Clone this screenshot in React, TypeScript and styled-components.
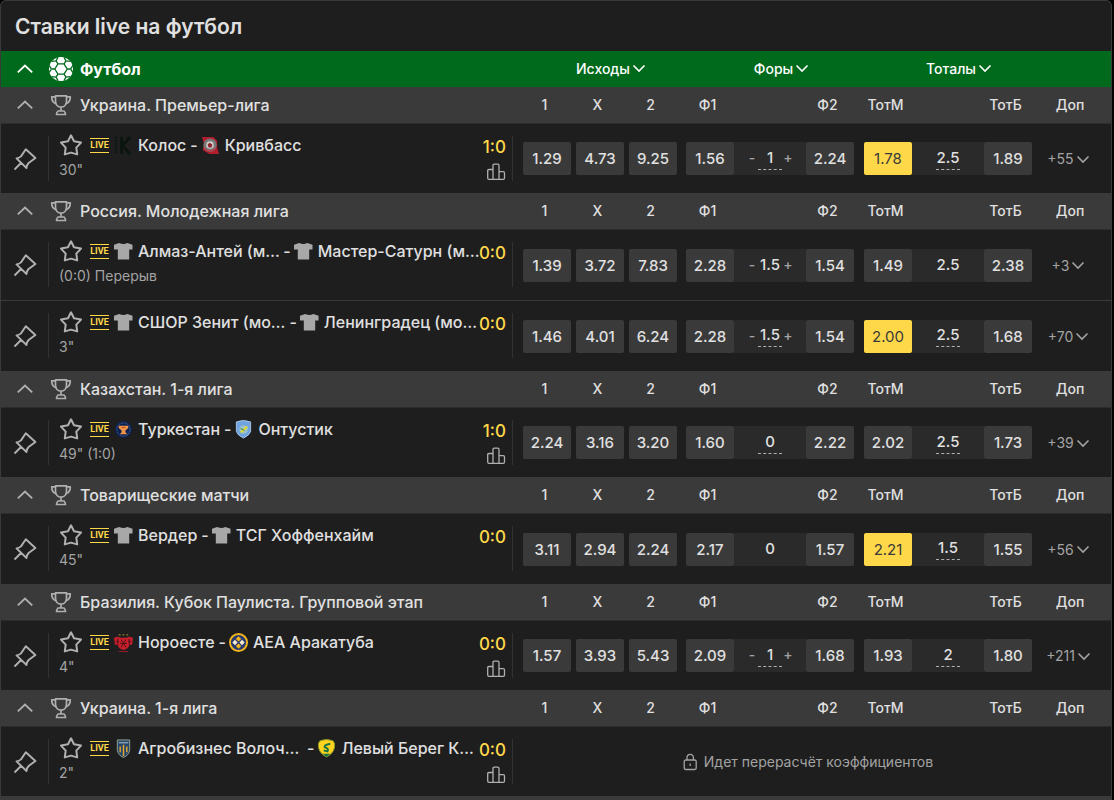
import React from 'react';
import styled, { createGlobalStyle, css } from 'styled-components';

const color = {
  page: '#000000',
  row: '#1e1e1e',
  bar: '#3a3a3a',
  line: '#323232',
  cell: '#3a3a3a',
  step: '#2a2a2a',
  green: '#006a1c',
  text: '#e0e0e0',
  muted: '#a3a3a3',
  icon: '#b0b0b0',
  yellow: '#ffd84a',
};

const Global = createGlobalStyle`
  * { box-sizing: border-box; }
  body {
    margin: 0;
    background: ${color.page};
    color: ${color.text};
    font-family: Inter, "Noto Sans", sans-serif;
    font-size: 15px;
    font-weight: 500;
  }
  button {
    font: inherit;
    color: inherit;
    background: none;
    border: 0;
    padding: 0;
    cursor: pointer;
  }
  svg { display: block; flex: none; }
`;

const Page = styled.main`
  padding-right: 2px;
`;

const Panel = styled.section`
  min-height: 100vh;
  background: ${color.bar};
  border: 1px solid ${color.bar};
  border-bottom: 0;
  border-radius: 6px 6px 0 0;
  overflow: hidden;
`;

const Title = styled.h1`
  margin: 0;
  padding: 2px 14px 0;
  background: ${color.row};
  font-size: 21px;
  line-height: 48px;
  font-weight: 600;
`;

const Board = styled.table`
  display: block;
`;

const Group = styled.tbody`
  display: block;
`;

const rowGrid = css`
  display: grid;
  grid-template-columns: 47px minmax(0, 1fr) 58px 53px 53px 57px 72px 48px 58px 72px 48px 79px;
  align-items: center;
`;

const SportRow = styled.tr`
  ${rowGrid}
  height: 36px;
  background: ${color.green};
  color: #fff;
`;

const LeagueRow = styled.tr`
  ${rowGrid}
  height: 37px;
  background: ${color.bar};
  border-bottom: 1px solid #2c2c2c;
`;

const MatchRow = styled.tr<{ $tall?: boolean }>`
  ${rowGrid}
  min-height: ${(p) => (p.$tall ? 70 : 69)}px;
  background: ${color.row};
  & + & {
    border-top: 1px solid ${color.bar};
    min-height: 71px;
  }
`;

const NameHead = styled.th`
  display: grid;
  grid-template-columns: 24px 1fr;
  justify-items: center start;
  align-items: center;
  gap: 7px;
  padding: 0 0 0 1px;
  text-align: left;
  white-space: nowrap;
  > * { justify-self: start; }
  > svg { justify-self: center; }
`;

const SportName = styled.span`
  font-size: 16px;
  font-weight: 700;
`;

const LeagueName = styled.span`
  font-size: 16px;
  font-weight: 500;
`;

const MarketHead = styled.th`
  grid-column: span 3;
  padding: 0 0 2px 32px;
  font-weight: 500;
  display: flex;
  justify-content: center;
`;

const MarketButton = styled.button`
  display: flex;
  align-items: center;
  gap: 2px;
  font-size: 14px;
`;

const ColumnHead = styled.th`
  width: 48px;
  justify-self: end;
  padding: 0 5px 2px 0;
  font-size: 14px;
  font-weight: 500;
  text-align: center;
`;

const MoreHead = styled(ColumnHead)`
  width: 79px;
  padding: 0 3px 2px 0;
`;

const IconCell = styled.td`
  padding: 0;
  display: flex;
  justify-content: center;
  color: ${color.icon};
`;

const SportIconCell = styled(IconCell)`
  color: #fff;
`;

const InfoCell = styled.td`
  display: grid;
  grid-template-columns: minmax(0, 1fr) auto;
  align-self: stretch;
  align-content: start;
  height: 45px;
  margin-top: 12px;
  padding: 0 6px 0 10px;
  border: solid ${color.line};
  border-width: 0 1px;
`;

const Teams = styled.div`
  display: flex;
  align-items: center;
  height: 22px;
  margin-top: -2px;
  font-size: 16px;
  white-space: nowrap;
`;

const Star = styled.button`
  display: flex;
  margin-right: 7px;
  color: ${color.icon};
`;

const Live = styled.span`
  display: flex;
  justify-content: center;
  width: 19px;
  height: 15px;
  margin-right: 5px;
  border: solid ${color.yellow};
  border-width: 1px 0;
  color: ${color.yellow};
  font: 700 9px/13px Roboto, sans-serif;
`;

const TeamName = styled.span<{ $width?: number }>`
  min-width: ${(p) => (p.$width ? p.$width + 'px' : '0')};
  margin-left: 5px;
`;

const Dash = styled.span`
  padding: 0 3px 0 4px;
`;

const Time = styled.div`
  color: ${color.muted};
  font-size: 14px;
  line-height: 24px;
  font-weight: 400;
`;

const Score = styled.div`
  color: ${color.yellow};
  font-size: 17px;
  line-height: 22px;
  text-align: right;
`;

const Stats = styled.button`
  display: flex;
  justify-content: flex-end;
  align-items: flex-end;
  height: 23px;
  color: ${color.icon};
`;

const OddCell = styled.td`
  padding: 0;
  width: 48px;
  justify-self: end;
`;

const Odd = styled.button<{ $hot?: boolean }>`
  display: block;
  width: 100%;
  height: 33px;
  border-radius: 2px;
  background: ${(p) => (p.$hot ? color.yellow : color.cell)};
  color: ${(p) => (p.$hot ? '#3a3a3a' : color.text)};
  font-size: 15px;
  font-weight: ${(p) => (p.$hot ? 400 : 500)};
  text-align: center;
`;

const LineCell = styled.td`
  display: flex;
  align-items: center;
  justify-content: center;
  height: 33px;
  padding: 0;
  background: ${color.step};
`;

const StepButton = styled.button`
  width: 12px;
  padding-bottom: 2px;
  color: ${color.muted};
  font-size: 14px;
`;

const LineValue = styled.button<{ $dashed?: boolean }>`
  width: 24px;
  height: ${(p) => (p.$dashed ? 22 : 20)}px;
  border-bottom: ${(p) => (p.$dashed ? '1px dashed ' + color.icon : '0')};
  font-size: 15px;
  line-height: 20px;
  white-space: nowrap;
  display: flex;
  justify-content: center;
`;

const MoreCell = styled.td`
  padding: 0 6px 0 0;
  display: flex;
  justify-content: center;
`;

const More = styled.button`
  display: flex;
  align-items: center;
  gap: 2px;
  color: ${color.muted};
  font-size: 14px;
  font-weight: 400;
`;

const LockedCell = styled.td`
  grid-column: 3 / -1;
  padding: 0 8px 0 0;
  display: flex;
  align-items: center;
  justify-content: center;
  gap: 6px;
  color: ${color.muted};
  font-size: 14px;
  font-weight: 400;
`;

const Chevron = ({ up, size = 14 }: { up?: boolean; size?: number }) => (
  <svg width={size} height={size} viewBox="0 0 14 14" fill="none" stroke="currentColor" strokeWidth="1.6">
    <path d={up ? 'M0.7 10 L7 4 L13.3 10' : 'M1.5 4.5 L7 10 L12.5 4.5'} />
  </svg>
);

const Ball = () => (
  <svg width="24" height="24" viewBox="0 0 24 24">
    <circle cx="12" cy="12" r="12" fill="#fff" />
    <g fill="none" stroke={color.green} strokeWidth="1.3">
      <path d="M9 6.8h6l3.2 5.2-3.2 5.2H9L5.8 12z" />
      <path d="M9 6.8 7 3.8M15 6.8l2-3M9 17.2l-2 3M15 17.2l2 3M5.8 12H2.5M18.2 12h3.3" />
      <path d="M7 3.8 9 .4M7 3.8 2.6 4.4M17 3.8 15 .4M17 3.8l4.4.6M7 20.2l2 3.4M7 20.2l-4.4-.6M17 20.2l-2 3.4M17 20.2l4.4-.6M2.5 12 0 8.5M2.5 12 0 15.5M21.5 12 24 8.5M21.5 12l2.5 3.5" />
    </g>
  </svg>
);

const Trophy = () => (
  <svg width="22" height="22" viewBox="0 0 22 22" fill="none" stroke={color.icon} strokeWidth="1.7" strokeLinejoin="round">
    <path d="M5.5 1.8h11v5.4c0 3.5-2.4 5.8-5.5 5.8S5.5 10.7 5.5 7.2z" />
    <path d="M5.5 2.8H1.7c0 3.8 1.6 6.2 4.5 7M16.5 2.8h3.8c0 3.8-1.6 6.2-4.5 7M11 13v4M8 17h6q1.5 1.5 1.5 3.5h-9Q6.5 18.5 8 17z" />
  </svg>
);

const Pin = () => (
  <svg width="24" height="24" viewBox="0 0 24 24" fill="none" stroke="currentColor" strokeWidth="1.9" strokeLinejoin="round">
    <path d="M1.5 22.5 8 16M3.5 11.4Q6 11.2 8 9.4L12.8 2.2 22.4 11 15.6 16Q13.6 18 13.5 21z" />
  </svg>
);

const StarIcon = () => (
  <svg width="24" height="22" viewBox="0 0 24 22" fill="none" stroke="currentColor" strokeWidth="2" strokeLinejoin="round">
    <path d="M12 1.3 15 7.3 22 8.6 17.3 13.6 18.2 20.4 12 18.6 5.8 20.4 6.7 13.6 2 8.6 9 7.3z" />
  </svg>
);

const StatsIcon = () => (
  <svg width="20" height="18" viewBox="0 0 20 18" fill="none" stroke="currentColor" strokeWidth="1.3" strokeLinejoin="round">
    <path d="M7 16.3V2.5Q7 1.2 8.3 1.2H11.7Q13 1.2 13 2.5V16.3M7 6.5H3Q1.7 6.5 1.7 7.8V15Q1.7 16.3 3 16.3H17.2Q18.5 16.3 18.5 15V10Q18.5 8.6 17.2 8.6H13" />
  </svg>
);

const LockIcon = () => (
  <svg width="15" height="18" viewBox="0 0 15 18" fill="none" stroke="currentColor" strokeWidth="1.3">
    <rect x="1.2" y="7" width="12" height="9.5" rx="1.5" />
    <path d="M4 7V4.5a3.2 3.2 0 0 1 6.4 0V7M7.2 10.500v2.5" />
  </svg>
);

type LogoKind = 'shirt' | 'kolos' | 'kryvbas' | 'turkestan' | 'ontustik' | 'noroeste' | 'aea' | 'agro' | 'left';

const logos: Record<LogoKind, React.ReactNode> = {
  shirt: <path fill="#a8a8a8" d="M5.500 1 0 3v5h4v10.5h12V8h3.5V3L14 1Q10 3 5.500 1z" />,
  kolos: (
    <g stroke="#0b1510" fill="none">
      <path strokeWidth="3" d="M8 1v18M17 1 9 10l8 9" />
      <path strokeWidth="2" d="M2 1v18" strokeDasharray="2 1" />
    </g>
  ),
  kryvbas: (
    <g>
      <path fill="#b01e2d" d="M1 1h12l4 4v7l2 7H9L2 15 3 8z" />
      <circle cx="9.5" cy="9.5" r="7" fill="#777" />
      <circle cx="9.5" cy="9.5" r="4" fill="#ccc" />
      <path fill="#8d2630" d="m9 7 3 2-1 3H8L7 9z" />
      <path fill="none" stroke="#d23344" d="M3.5 12.5q6 6 12 0" />
    </g>
  ),
  turkestan: (
    <g>
      <circle cx="10" cy="10" r="9" fill="#0b2150" />
      <circle cx="10" cy="10" r="7" fill="none" stroke="#6978a0" strokeWidth="1" strokeDasharray="1 1" />
      <path fill="#f0944a" d="M5 6h10v2.5L12 11v2l2 2H6l2-2v-2L5 8.5z" />
      <path stroke="#b44a20" d="M8 8h4" />
    </g>
  ),
  ontustik: (
    <g>
      <path fill="#6fa4e0" stroke="#a9c4e6" d="M2.5 2Q10-1 17.5 2v10q-1 4-7.5 7-6.500-3-7.500-7z" />
      <circle cx="10" cy="10" r="4.5" fill="#9cc2c9" />
      <path stroke="#d9d83b" strokeWidth="2.5" d="m7 13 7-6" />
      <path stroke="#3f7b57" d="m7 9 4 2" />
    </g>
  ),
  noroeste: (
    <g>
      <path fill="#c91f2c" d="M0 5 4 4l3 1h6l3-1 4 1-1 7-3 1q-1 4-6 5-5-1-6-5l-3-1z" />
      <path stroke="#4c1118" fill="none" d="M4 6v7M16 6v7M7.5 7l5 8M12.5 7l-5 8M2 9h3M15 9h3M6.500 11h7" />
      <path stroke="#b79b2a" strokeDasharray="2 2" d="M5 2h10" />
      <path stroke="#a01a25" d="M5 19.5h10" />
    </g>
  ),
  aea: (
    <g>
      <circle cx="10" cy="10" r="9" fill="#253a70" stroke="#f2b51d" strokeWidth="2" />
      <path fill="#f2b51d" d="m10 3.500 2.800 2.800L10 9 7.200 6.300zM10 11l2.800 2.800L10 16.500l-2.800-2.700z" />
      <path fill="#f4ead0" d="M6.300 7.200 9 10l-2.700 2.800L3.500 10zM13.700 7.200 16.500 10l-2.800 2.800L11 10z" />
    </g>
  ),
  agro: (
    <g>
      <path fill="#26466b" stroke="#9ba58b" d="M3.5 1h13v11q-1 5-6.500 7.500Q4.500 17 3.500 12z" />
      <path stroke="#e5a72c" strokeWidth="1.5" fill="none" d="M6.5 8v6M10 6v12M13.500 8v6" />
      <path stroke="#b7ccd8" d="M5 4h10" />
    </g>
  ),
  left: (
    <g>
      <path fill="#ffd31e" stroke="#8a9b2a" d="M3 2q7-3 14 0l1.500 3q1 9-8.500 14Q.5 14 1.500 5z" />
      <path fill="none" stroke="#157246" strokeWidth="2" d="M14 5Q8 6 8 8.500q5 1.500 3 4.500l-4-1" />
      <path fill="#157246" d="M6 15.500h8L10 19z" />
    </g>
  ),
};

const Logo = ({ kind }: { kind: LogoKind }) => (
  <svg width="19" height="19" viewBox="0 0 20 20">
    {logos[kind]}
  </svg>
);

type Line = { value: string; dashed?: boolean; steps?: boolean };
type Match = {
  home: string;
  homeLogo: LogoKind;
  homeWidth?: number;
  away: string;
  awayLogo: LogoKind;
  score: string;
  time: string;
  stats?: boolean;
  odds?: string[];
  handicap?: Line;
  total?: Line;
  hot?: boolean;
  more?: string;
};

const leagues: { name: string; matches: Match[] }[] = [
  {
    name: 'Украина. Премьер-лига',
    matches: [
      {
        home: 'Колос', homeLogo: 'kolos', away: 'Кривбасс', awayLogo: 'kryvbas', score: '1:0', time: '30"', stats: true,
        odds: ['1.29', '4.73', '9.25', '1.56', '2.24', '1.78', '1.89'],
        handicap: { value: '1', dashed: true, steps: true }, total: { value: '2.5', dashed: true }, hot: true, more: '+55',
      },
    ],
  },
  {
    name: 'Россия. Молодежная лига',
    matches: [
      {
        home: 'Алмаз-Антей (м…', homeLogo: 'shirt', away: 'Мастер-Сатурн (м…', awayLogo: 'shirt', score: '0:0', time: '(0:0) Перерыв',
        odds: ['1.39', '3.72', '7.83', '2.28', '1.54', '1.49', '2.38'],
        handicap: { value: '1.5', steps: true }, total: { value: '2.5' }, more: '+3',
      },
      {
        home: 'СШОР Зенит (мо…', homeLogo: 'shirt', away: 'Ленинградец (мо…', awayLogo: 'shirt', score: '0:0', time: '3"',
        odds: ['1.46', '4.01', '6.24', '2.28', '1.54', '2.00', '1.68'],
        handicap: { value: '1.5', dashed: true, steps: true }, total: { value: '2.5', dashed: true }, hot: true, more: '+70',
      },
    ],
  },
  {
    name: 'Казахстан. 1-я лига',
    matches: [
      {
        home: 'Туркестан', homeLogo: 'turkestan', away: 'Онтустик', awayLogo: 'ontustik', score: '1:0', time: '49" (1:0)', stats: true,
        odds: ['2.24', '3.16', '3.20', '1.60', '2.22', '2.02', '1.73'],
        handicap: { value: '0', dashed: true }, total: { value: '2.5', dashed: true }, more: '+39',
      },
    ],
  },
  {
    name: 'Товарищеские матчи',
    matches: [
      {
        home: 'Вердер', homeLogo: 'shirt', away: 'ТСГ Хоффенхайм', awayLogo: 'shirt', score: '0:0', time: '45"',
        odds: ['3.11', '2.94', '2.24', '2.17', '1.57', '2.21', '1.55'],
        handicap: { value: '0' }, total: { value: '1.5', dashed: true }, hot: true, more: '+56',
      },
    ],
  },
  {
    name: 'Бразилия. Кубок Паулиста. Групповой этап',
    matches: [
      {
        home: 'Нороесте', homeLogo: 'noroeste', away: 'АЕА Аракатуба', awayLogo: 'aea', score: '0:0', time: '4"', stats: true,
        odds: ['1.57', '3.93', '5.43', '2.09', '1.68', '1.93', '1.80'],
        handicap: { value: '1', dashed: true, steps: true }, total: { value: '2', dashed: true }, more: '+211',
      },
    ],
  },
  {
    name: 'Украина. 1-я лига',
    matches: [
      {
        home: 'Агробизнес Волоч…', homeLogo: 'agro', homeWidth: 165, away: 'Левый Берег К…', awayLogo: 'left', score: '0:0', time: '2"', stats: true,
      },
    ],
  },
];

const OddButton = ({ value, hot }: { value: string; hot?: boolean }) => (
  <OddCell>
    <Odd type="button" $hot={hot}>{value}</Odd>
  </OddCell>
);

const LineBox = ({ line }: { line: Line }) => (
  <LineCell>
    {line.steps && <StepButton type="button">-</StepButton>}
    <LineValue type="button" $dashed={line.dashed}>{line.value}</LineValue>
    {line.steps && <StepButton type="button">+</StepButton>}
  </LineCell>
);

const MatchLine = ({ match }: { match: Match }) => (
  <MatchRow $tall={!match.stats}>
    <IconCell>
      <button type="button" aria-label="Закрепить"><Pin /></button>
    </IconCell>
    <InfoCell>
      <Teams>
        <Star type="button" aria-label="В избранное"><StarIcon /></Star>
        <Live>LIVE</Live>
        <Logo kind={match.homeLogo} />
        <TeamName $width={match.homeWidth}>{match.home}</TeamName>
        <Dash>-</Dash>
        <Logo kind={match.awayLogo} />
        <TeamName>{match.away}</TeamName>
      </Teams>
      <Score>{match.score}</Score>
      <Time>{match.time}</Time>
      {match.stats && (
        <Stats type="button" aria-label="Статистика"><StatsIcon /></Stats>
      )}
    </InfoCell>
    {match.odds && match.handicap && match.total ? (
      <>
        {match.odds.slice(0, 4).map((value, i) => <OddButton key={i} value={value} />)}
        <LineBox line={match.handicap} />
        <OddButton value={match.odds[4]} />
        <OddButton value={match.odds[5]} hot={match.hot} />
        <LineBox line={match.total} />
        <OddButton value={match.odds[6]} />
        <MoreCell>
          <More type="button">{match.more}<Chevron /></More>
        </MoreCell>
      </>
    ) : (
      <LockedCell><LockIcon />Идет перерасчёт коэффициентов</LockedCell>
    )}
  </MatchRow>
);

const markets = ['Исходы', 'Форы', 'Тоталы'];
const columns = ['1', 'X', '2', 'Ф1', '', 'Ф2', 'ТотМ', '', 'ТотБ'];

export default function App() {
  return (
    <Page>
      <Global />
      <Panel>
        <Title>Ставки live на футбол</Title>
        <Board>
          <Group>
            <SportRow>
              <SportIconCell>
                <button type="button" aria-label="Свернуть"><Chevron up size={16} /></button>
              </SportIconCell>
              <NameHead><Ball /><SportName>Футбол</SportName></NameHead>
              {markets.map((market) => (
                <MarketHead key={market} colSpan={3}>
                  <MarketButton type="button">{market}<Chevron /></MarketButton>
                </MarketHead>
              ))}
            </SportRow>
          </Group>
          {leagues.map((league) => (
            <Group key={league.name}>
              <LeagueRow>
                <IconCell>
                  <button type="button" aria-label="Свернуть"><Chevron up size={16} /></button>
                </IconCell>
                <NameHead><Trophy /><LeagueName>{league.name}</LeagueName></NameHead>
                {columns.map((name, i) => <ColumnHead key={i}>{name}</ColumnHead>)}
                <MoreHead>Доп</MoreHead>
              </LeagueRow>
              {league.matches.map((match) => <MatchLine key={match.home} match={match} />)}
            </Group>
          ))}
        </Board>
      </Panel>
    </Page>
  );
}
